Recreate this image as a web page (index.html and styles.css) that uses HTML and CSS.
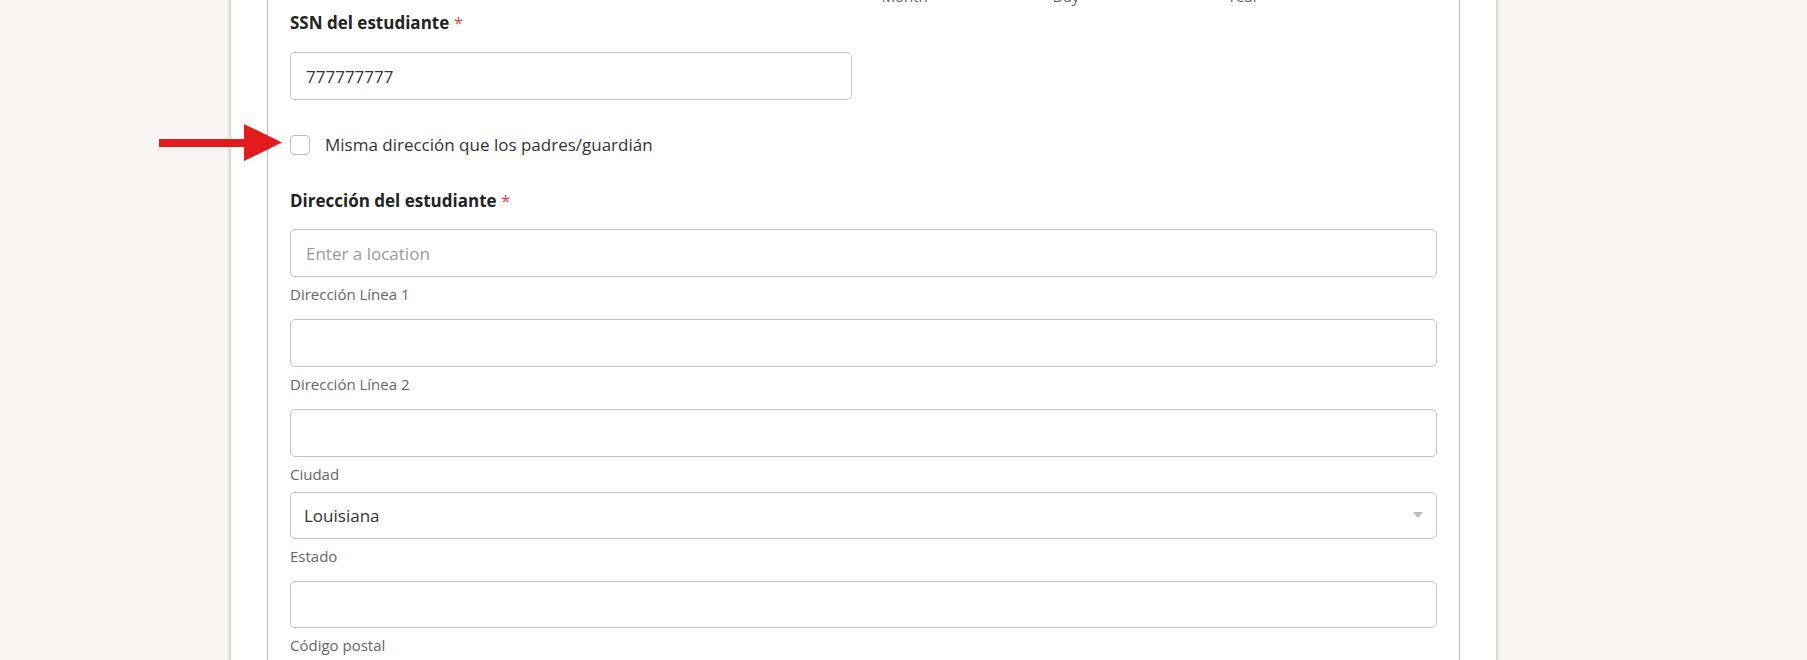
FILE: index.html
```html
<!DOCTYPE html>
<html lang="es">
<head>
  <meta charset="UTF-8" />
  <meta name="viewport" content="width=device-width, initial-scale=1.0"/>
  <title>Registro del estudiante</title>
  <link rel="stylesheet" href="styles.css">
</head>
<body>

  <div class="page">
    <svg class="pointer" width="123" height="38" viewBox="0 0 123 38">
      <rect x="0" y="15" width="87" height="8" fill="#e21c1c"/>
      <polygon points="85,0 123,18.5 85,37" fill="#e21c1c"/>
    </svg>

    <div class="paper">
      <div class="panel">

        <div class="row">
          <div class="col"></div>
          <div class="col date-parts">
            <span>Month</span>
            <span>Day</span>
            <span>Year</span>
          </div>
        </div>

        <div class="row ssn">
          <div class="col">
            <div class="label">SSN del estudiante <span class="req">*</span></div>
            <input class="text-input" type="text" value="777777777" />
          </div>
          <div class="col"></div>
        </div>

        <label class="check">
          <input type="checkbox" />
          <span class="box"></span>
          <span>Misma dirección que los padres/guardián</span>
        </label>

        <div class="address">
          <div class="label">Dirección del estudiante <span class="req">*</span></div>

          <div class="part first">
            <input class="text-input" type="text" placeholder="Enter a location" />
            <div class="sub">Dirección Línea 1</div>
          </div>

          <div class="part">
            <input class="text-input" type="text" />
            <div class="sub">Dirección Línea 2</div>
          </div>

          <div class="part">
            <input class="text-input" type="text" />
            <div class="sub">Ciudad</div>
          </div>

          <div class="part state">
            <div class="select-wrap">
              <select class="select-input">
                <option>Louisiana</option>
              </select>
            </div>
            <div class="sub">Estado</div>
          </div>

          <div class="part">
            <input class="text-input zip" type="text" />
            <div class="sub">Código postal</div>
          </div>
        </div>

      </div>
    </div>
  </div>

</body>
</html>
```

FILE: styles.css
```css
* { box-sizing: border-box; }

body {
  margin: 0;
  font-family: 'Open Sans', 'Liberation Sans', sans-serif;
  background: #f8f5f2;
  color: #333;
  overflow: hidden;
}

.page {
  position: relative;
  width: 1265px;
  margin: -12px 0 0 231px;
}

/* red annotation arrow */
.pointer {
  position: absolute;
  left: -72px;
  top: 136px;
}

.paper {
  background: #fff;
  padding: 0 36px;
  box-shadow: 0 0 4px rgba(0, 0, 0, 0.35);
  min-height: 720px;
}

.panel {
  border-left: 1px solid #b9b9b9;
  border-right: 1px solid #b9b9b9;
  padding: 0 22px 40px;
  min-height: 720px;
}

.row {
  display: grid;
  grid-template-columns: 1fr 1fr;
  gap: 24px;
}

.date-parts {
  display: grid;
  grid-template-columns: 171px 175px auto;
  padding-left: 6px;
  font-size: 15px;
  line-height: 16px;
  color: #666;
}

.ssn {
  margin-top: 8px;
}

.label {
  font-size: 17px;
  line-height: 22px;
  font-weight: 700;
  color: #222;
}

.req {
  color: #e04545;
  font-weight: 400;
}

.text-input, .select-input {
  display: block;
  width: 100%;
  height: 48px;
  margin: 0;
  padding: 0 15px;
  border: 1px solid #c4c4c4;
  border-radius: 5px;
  background: #fff;
  font-family: inherit;
  font-size: 17px;
  color: #333;
  outline: none;
}

.text-input::placeholder {
  color: #9a9a9a;
}

.ssn .text-input {
  margin-top: 18px;
}

.check {
  display: flex;
  align-items: center;
  gap: 15px;
  margin-top: 35px;
  font-size: 17px;
  line-height: 20px;
  color: #333;
}

.check input {
  display: none;
}

.check .box {
  width: 20px;
  height: 20px;
  border: 1px solid #bdbdbd;
  border-radius: 4px;
  background: #fff;
}

.address {
  margin-top: 35px;
}

.part {
  margin-top: 15px;
}

.part.first {
  margin-top: 17px;
}

.part.state {
  margin-top: 8px;
}

.sub {
  margin-top: 7px;
  font-size: 15px;
  line-height: 20px;
  color: #666;
}

.select-wrap {
  position: relative;
}

.select-input {
  appearance: none;
  -webkit-appearance: none;
  height: 47px;
  padding-left: 13px;
}

.select-wrap::after {
  content: "";
  position: absolute;
  right: 14px;
  top: 20px;
  border-left: 5px solid transparent;
  border-right: 5px solid transparent;
  border-top: 6px solid #bbb;
}

.zip {
  height: 47px;
}
```
